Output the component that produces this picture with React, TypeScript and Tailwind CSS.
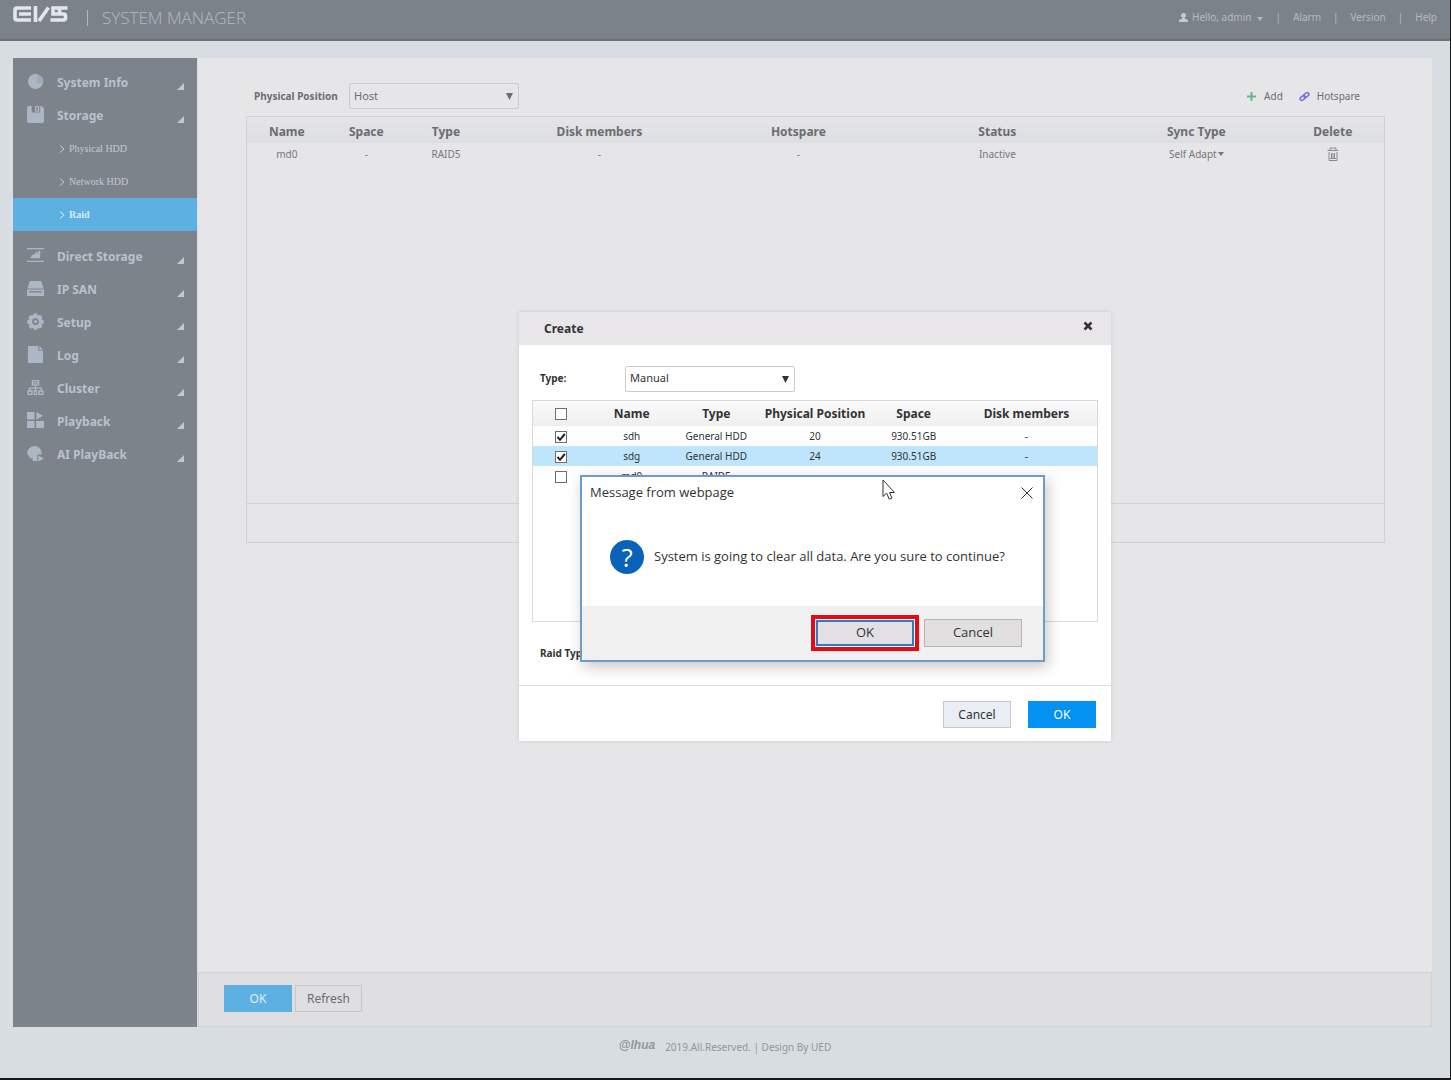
import type { ReactNode } from "react";
import clsx from "clsx";

interface MenuItem {
  label: string;
  icon: ReactNode;
  children?: { label: string; active?: boolean }[];
}

const menu: MenuItem[] = [
  {
    label: "System Info",
    icon: (
      <>
        <path d="M9 1a8 8 0 1 0 8 9L10.500 10V1.200z" />
        <path d="M9 0.800V10h8.200A8.200 8.200 0 0 0 9 .8z" opacity=".75" />
      </>
    ),
  },
  {
    label: "Storage",
    icon: (
      <path
        fillRule="evenodd"
        d="M2 0h3v7h9V0h1.500L18 2.500V16a2 2 0 0 1-2 2H2a2 2 0 0 1-2-2V2a2 2 0 0 1 2-2zM8.500 0H13v6H8.500zM10 1v4h1.500V1z"
      />
    ),
    children: [{ label: "Physical HDD" }, { label: "Network HDD" }, { label: "Raid", active: true }],
  },
  {
    label: "Direct Storage",
    icon: <path d="M0 1h18v1.500H0zM0 14.500h18V16H0zM3 12l3-4h2l2-4 1 3 1-1V4h2v8z" />,
  },
  {
    label: "IP SAN",
    icon: <path fillRule="evenodd" d="M3 1h12l2.500 8H.5zM0 10h18v7H0zM2 12v1.200h14V12z" />,
  },
  {
    label: "Setup",
    icon: (
      <path
        fillRule="evenodd"
        d="M7 .5h4l.6 2.300 2.200-.9 2.600 2.700-1 2.200 2.300.8v3.400l-2.300 1 .9 2.200-2.600 2.600-2.200-1-.7 2h-3.600l-.9-2.100-2.200 1-2.500-2.500.9-2.200-2.200-.9V7.700l2.200-.9-.9-2.200 2.500-2.600 2.200.9zM9 5.500a3.600 3.600 0 1 0 0 7.200 3.600 3.600 0 0 0 0-7.200zM9 7.400a1.700 1.700 0 1 1 0 3.400 1.700 1.700 0 0 1 0-3.400z"
      />
    ),
  },
  {
    label: "Log",
    icon: <path d="M1 0h11v5h5v12a1 1 0 0 1-1 1H2a1 1 0 0 1-1-1zM13 0l4 4h-4z" />,
  },
  {
    label: "Cluster",
    icon: (
      <path
        fillRule="evenodd"
        d="M5 1h8v6H9.700v2H16v3h1.500v5H12v-5h2.500v-1.600H9.700V12H11v5H7v-5h1.300v-1.600H3.500V12H6v5H.5v-5H2V9h6.300V7H5zM6.500 2.500v1h5v-1zM6.500 4.800v.8h5v-.8zM2 13.500v2h2.500v-2zM8.300 13.500v2h1.400v-2zM13.500 13.500v2H16v-2z"
      />
    ),
  },
  {
    label: "Playback",
    icon: <path d="M0 0h8v8H0zM10 0l7 4-7 4zM0 9.500h8v7.500H0zM9.500 9.500H18v7.500H9.500z" />,
  },
  {
    label: "AI PlayBack",
    icon: (
      <path d="M8 1a7.500 7.500 0 0 1 7.500 7.500V10H11v7H6v-3H4a3 3 0 0 1-2-2.500L.5 10A7.500 7.500 0 0 1 8 1zM12 11l6 3.200-6 3.300z" />
    ),
  },
];

const diskRows = [
  { name: "sdh", type: "General HDD", position: "20", space: "930.51GB", members: "-", checked: true },
  { name: "sdg", type: "General HDD", position: "24", space: "930.51GB", members: "-", checked: true, selected: true },
  { name: "md0", type: "RAID5", position: "", space: "", members: "", checked: false },
];

function SideMenu() {
  return (
    <nav className="w-[184px] shrink-0 bg-[#7c838b] pt-2">
      {menu.map((item) => (
        <div key={item.label}>
          <a href="#" className="flex h-[33px] items-center pr-[13px] pl-[14px] text-[#b9c1cc]">
            <svg viewBox="0 0 18 18" className="mr-[13px] -mt-0.5 size-[17px] fill-[#acb7c6]">
              {item.icon}
            </svg>
            <span className="flex-1 text-[12px] font-bold">{item.label}</span>
            <svg viewBox="0 0 7 7" className="mt-2 size-[7px] fill-[#c3c8cd]">
              <path d="M7 0v7H0z" />
            </svg>
          </a>
          {item.children && (
            <ul className="mb-[9px]">
              {item.children.map((child) => (
                <li key={child.label}>
                  <a
                    href="#"
                    className={clsx(
                      "flex h-[33px] items-center gap-1 pl-[46px] font-['Liberation_Serif',serif] text-[10px]",
                      child.active ? "bg-[#5cb0e2] font-bold text-[#dcebf6]" : "text-[#c3c9d0]"
                    )}
                  >
                    <svg viewBox="0 0 6 8" className="h-2 w-1.5 fill-none stroke-current">
                      <path d="M1 0.500l4 3.500-4 3.500" />
                    </svg>
                    {child.label}
                  </a>
                </li>
              ))}
            </ul>
          )}
        </div>
      ))}
    </nav>
  );
}

interface PickerProps {
  id: string;
  value: string;
  className: string;
}

function Picker({ id, value, className }: PickerProps) {
  return (
    <div className="relative w-[170px]">
      <select
        id={id}
        className={clsx("block h-[26px] w-full appearance-none rounded-xs border px-1 text-[11px]", className)}
      >
        <option>{value}</option>
      </select>
      <svg viewBox="0 0 8 8" className="pointer-events-none absolute top-[10px] right-[6px] size-[7px] fill-current">
        <path d="M0 0h8L4 8z" />
      </svg>
    </div>
  );
}

function CheckBox({ label, checked }: { label: string; checked?: boolean }) {
  return (
    <span className="relative mx-auto block size-3">
      <input
        type="checkbox"
        aria-label={label}
        defaultChecked={checked}
        className="peer block size-3 appearance-none border border-[#6e6e6e] bg-white"
      />
      <svg
        viewBox="0 0 12 12"
        className="pointer-events-none absolute inset-0 hidden size-3 fill-none stroke-[#222] stroke-2 peer-checked:block"
      >
        <path d="M2.500 6l2.500 2.800L9.800 3" />
      </svg>
    </span>
  );
}

function TopBar() {
  return (
    <header className="flex h-[41px] items-start justify-between border-b-2 border-[#6a7077] bg-[#7c828a] pr-[13px] pl-[13px] text-[#b4bac1]">
      <div className="flex items-start">
        <svg viewBox="0 0 55 16" className="mt-[6px] h-4 w-[55px] fill-none stroke-[#e3e6ea] stroke-[3.600]">
          <path d="M18 2H4a2 2 0 0 0-2 2v8a2 2 0 0 0 2 2h14M6 8h12M22.500 0v16M26 15L35.500 1.500M54.500 2H40v6h10.500a2 2 0 0 1 2 2v2a2 2 0 0 1-2 2H37.500M46.500 2v6" />
        </svg>
        <span className="mt-[10px] ml-[19px] h-4 w-px bg-[#b4bac1]" />
        <h1 className="mt-[6px] ml-[14px] font-['Open_Sans',sans-serif] text-[17px] leading-6 font-light">
          SYSTEM MANAGER
        </h1>
      </div>
      <div className="mt-[9px] flex items-center text-[10px] leading-4">
        <button className="flex items-center">
          <svg viewBox="0 0 9 9" className="mr-1 size-[9px] fill-[#c5cad0]">
            <path d="M4.500 0a2.300 2.300 0 0 1 1.300 4.300V5.500L9 7v2H0V7l3.200-1.500V4.300A2.300 2.300 0 0 1 4.500 0z" />
          </svg>
          Hello, admin
          <svg viewBox="0 0 6 4" className="mt-1 ml-[6px] h-1 w-1.5 fill-current">
            <path d="M0 0h6L3 4z" />
          </svg>
        </button>
        <span className="mx-3">|</span>
        <a href="#">Alarm</a>
        <span className="mx-3">|</span>
        <a href="#">Version</a>
        <span className="mx-3">|</span>
        <a href="#">Help</a>
      </div>
    </header>
  );
}

function RaidTable() {
  return (
    <div className="flex h-[427px] flex-col border border-[#d0d1d5]">
      <table className="w-full table-fixed text-center text-[10px] text-[#77787b]">
        <colgroup>
          <col className="w-[7%]" />
          <col className="w-[7%]" />
          <col className="w-[7%]" />
          <col className="w-[20%]" />
          <col className="w-[15%]" />
          <col className="w-[20%]" />
          <col className="w-[15%]" />
          <col className="w-[9%]" />
        </colgroup>
        <thead>
          <tr className="h-[26px] bg-linear-to-b from-[#e5e5e8] to-[#dcdee1] text-[12px] text-[#6c6d70] *:pt-[3px]">
            <th>Name</th>
            <th>Space</th>
            <th>Type</th>
            <th>Disk members</th>
            <th>Hotspare</th>
            <th>Status</th>
            <th>Sync Type</th>
            <th>Delete</th>
          </tr>
        </thead>
        <tbody>
          <tr className="h-[22px]">
            <td>md0</td>
            <td>-</td>
            <td>RAID5</td>
            <td>-</td>
            <td>-</td>
            <td>Inactive</td>
            <td>
              <button className="inline-flex items-center gap-px">
                Self Adapt
                <svg viewBox="0 0 6 4" className="h-1 w-1.5 fill-current">
                  <path d="M0 0h6L3 4z" />
                </svg>
              </button>
            </td>
            <td>
              <button aria-label="Delete" className="mx-auto block">
                <svg viewBox="0 0 12 14" className="h-[14px] w-3 fill-none stroke-[#8b8c90]">
                  <path d="M0.500 3.500h11M3 3V1h6v2M2 5v8.500h8V5M4.500 6v5.500M7.500 6v5.500M6 6v5.500M3 11.500h6" />
                </svg>
              </button>
            </td>
          </tr>
        </tbody>
      </table>
      <div className="mt-auto h-[39px] border-t border-[#d0d1d5]" />
    </div>
  );
}

function MessageBox() {
  return (
    <div
      role="alertdialog"
      aria-label="Message from webpage"
      className="absolute top-[163px] left-[61px] w-[465px] border-2 border-[#6d9cc4] bg-white font-['Open_Sans',sans-serif] text-[13px] text-[#333] shadow-[3px_5px_14px_rgba(0,0,0,0.22)]"
    >
      <div className="flex h-[31px] items-center justify-between pr-[10px] pl-2">
        <span>Message from webpage</span>
        <button aria-label="Close">
          <svg viewBox="0 0 12 12" className="size-3 fill-none stroke-[#333]">
            <path d="M.5.5l11 11M11.500.5l-11 11" />
          </svg>
        </button>
      </div>
      <div className="flex h-[98px] items-center gap-[10px] pl-7">
        <span className="flex size-[34px] items-center justify-center rounded-full bg-[#0b62bb] text-[26px] leading-none text-white">
          ?
        </span>
        <p>System is going to clear all data. Are you sure to continue?</p>
      </div>
      <div className="flex h-[54px] items-center justify-end gap-[5px] bg-[#f0f0f0] pr-[21px]">
        <div className="border-4 border-[#e60a12] bg-white p-px">
          <button className="block h-[26px] w-[98px] border-2 border-[#2f7cc0] bg-[#e2e0e2]">OK</button>
        </div>
        <button className="h-7 w-[98px] border border-[#b5b5b7] bg-[#e1dfe0]">Cancel</button>
      </div>
      <svg
        viewBox="0 0 14 22"
        className="pointer-events-none absolute top-[2px] left-[300px] h-[22px] w-[14px] fill-white stroke-[#333]"
      >
        <path d="M1 1v16.500l3.700-3.300 2.500 6 2.800-1.200-2.500-5.500h5z" />
      </svg>
    </div>
  );
}

function CreateDialog() {
  return (
    <section
      aria-label="Create"
      className="absolute top-[254px] left-1/2 w-[592px] -translate-x-1/2 bg-white text-[#333] shadow-[0_0_4px_rgba(0,0,0,0.12)]"
    >
      <div className="flex h-[33px] items-center justify-between bg-[#e8e6e9] pr-[18px] pl-[25px]">
        <h2 className="text-[12px] font-bold">Create</h2>
        <button aria-label="Close" className="-mt-[6px]">
          <svg viewBox="0 0 10 10" className="size-[10px] fill-none stroke-[#333] stroke-[2.500]">
            <path d="M1.500 1.500l7 7M8.500 1.500l-7 7" />
          </svg>
        </button>
      </div>
      <div className="flex h-[55px] items-center pt-3 pl-[21px]">
        <label htmlFor="raid-mode" className="w-[85px] text-[10px] font-bold">
          Type:
        </label>
        <Picker id="raid-mode" value="Manual" className="border-[#ccc] bg-white" />
      </div>
      <div className="mx-[13px] h-[222px] border border-[#d9d9db]">
        <table className="w-full table-fixed text-center text-[10px]">
          <colgroup>
            <col className="w-[10%]" />
            <col className="w-[15%]" />
            <col className="w-[15%]" />
            <col className="w-[20%]" />
            <col className="w-[15%]" />
            <col className="w-[25%]" />
          </colgroup>
          <thead>
            <tr className="h-[25px] bg-linear-to-b from-[#fafafa] to-[#efeff0] text-[12px]">
              <th>
                <CheckBox label="Select all" />
              </th>
              <th>Name</th>
              <th>Type</th>
              <th>Physical Position</th>
              <th>Space</th>
              <th>Disk members</th>
            </tr>
          </thead>
          <tbody>
            {diskRows.map((row) => (
              <tr key={row.name} className={clsx("h-5", row.selected && "bg-[#bfe5fd]")}>
                <td className="pt-0.5">
                  <CheckBox label={row.name} checked={row.checked} />
                </td>
                <td>{row.name}</td>
                <td>{row.type}</td>
                <td>{row.position}</td>
                <td>{row.space}</td>
                <td>{row.members}</td>
              </tr>
            ))}
          </tbody>
        </table>
      </div>
      <div className="flex h-16 items-center border-b border-[#dedde0] pl-[21px] text-[10px] font-bold">Raid Type:</div>
      <div className="flex h-[55px] items-center justify-end gap-[17px] pt-0.5 pr-[15px] text-[12px]">
        <button className="h-[27px] w-[68px] border border-[#c3c8ce] bg-[#e9eef4]">Cancel</button>
        <button className="h-[27px] w-[68px] bg-[#0391f2] text-white">OK</button>
      </div>
      <MessageBox />
    </section>
  );
}

export default function App() {
  return (
    <div className="flex min-h-screen flex-col border-r border-b-2 border-[#14181c] bg-[#d8dde1] font-['Noto_Sans',sans-serif]">
      <TopBar />
      <div className="flex flex-1 gap-px pt-[17px] pr-[18px] pl-[13px]">
        <SideMenu />
        <main className="relative flex flex-1 flex-col bg-[#e6e5e8]">
          <div className="flex-1 pt-[25px] pr-[47px] pl-[48px] text-[#6c6d70]">
            <div className="mb-[7px] flex items-center">
              <label htmlFor="position" className="w-[103px] pl-2 text-[10px] font-bold whitespace-nowrap">
                Physical Position
              </label>
              <Picker id="position" value="Host" className="border-[#cbccd0] bg-[#e6e5e8]" />
              <div className="ml-auto flex gap-4 pr-[25px] text-[10px]">
                <button className="flex items-center gap-2">
                  <svg viewBox="0 0 9 9" className="size-[9px] fill-none stroke-[#62b787] stroke-2">
                    <path d="M0 4.500h9M4.500 0v9" />
                  </svg>
                  Add
                </button>
                <button className="flex items-center gap-[7px]">
                  <svg viewBox="0 0 11 11" className="size-[11px] fill-none stroke-[#7370e0] stroke-[1.600]">
                    <rect x="-2.8" y="-1.7" width="5.6" height="3.4" rx="1.7" transform="translate(3.7 7) rotate(-40)" />
                    <rect x="-2.8" y="-1.7" width="5.6" height="3.4" rx="1.7" transform="translate(7.3 4) rotate(-40)" />
                  </svg>
                  Hotspare
                </button>
              </div>
            </div>
            <RaidTable />
          </div>
          <div className="flex h-[55px] items-center gap-[3px] border border-[#d0d1d5] bg-[#dfdfe2] pb-0.5 pl-[25px] text-[12px]">
            <button className="h-[27px] w-[68px] bg-[#5cb0e2] text-[#e1eff8]">OK</button>
            <button className="h-[27px] w-[67px] border border-[#c6c7cb] text-[#6c6d70]">Refresh</button>
          </div>
          <CreateDialog />
        </main>
      </div>
      <footer className="flex h-[51px] items-start justify-center pt-3 text-[10px] leading-4 text-[#92969b]">
        <span className="-mt-0.5 mr-[10px] font-['Liberation_Sans',sans-serif] text-[12px] leading-4 font-bold italic">
          @lhua
        </span>
        2019.All.Reserved. | Design By UED
      </footer>
    </div>
  );
}
